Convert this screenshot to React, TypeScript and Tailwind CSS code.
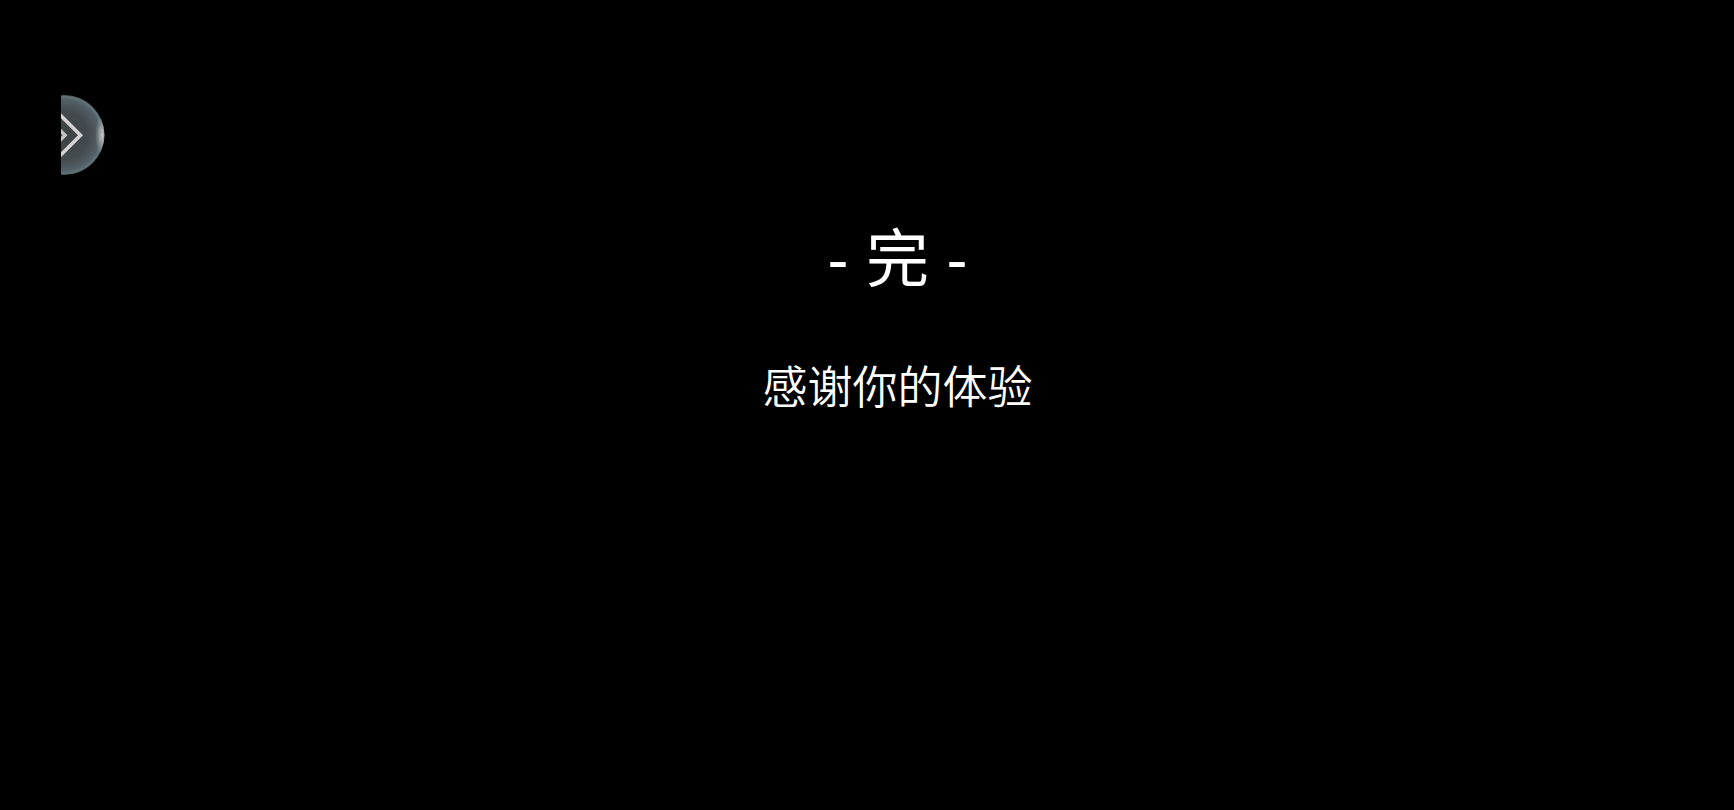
import React from 'react';

interface MenuHandleProps {
  onOpen?: () => void;
}

const MenuHandle: React.FC<MenuHandleProps> = ({ onOpen }) => {
  return (
    <button
      type="button"
      onClick={onOpen}
      aria-label="展开"
      className="block cursor-pointer"
    >
      <svg width="46" height="80" viewBox="0 0 46 80" fill="none">
        <defs>
          <radialGradient id="orb" gradientUnits="userSpaceOnUse" cx="3.5" cy="40" r="40">
            <stop offset="0" stopColor="#3c4042" />
            <stop offset="0.6" stopColor="#444b4e" />
            <stop offset="0.88" stopColor="#526066" />
            <stop offset="0.96" stopColor="#627377" />
            <stop offset="1" stopColor="#3f4c50" />
          </radialGradient>
          <radialGradient
            id="shine"
            cx="0"
            cy="0"
            r="1"
            gradientUnits="userSpaceOnUse"
            gradientTransform="translate(41 40) scale(7 22)"
          >
            <stop offset="0" stopColor="#c4c7c8" />
            <stop offset="0.4" stopColor="#a8adaf" stopOpacity="0.7" />
            <stop offset="1" stopColor="#8a9598" stopOpacity="0" />
          </radialGradient>
        </defs>
        <circle cx="3.5" cy="40" r="40" fill="url(#orb)" />
        <circle cx="3.5" cy="40" r="40" fill="url(#shine)" />
        {/* double chevron, cut off by the edge */}
        <path d="M-2 18.7L19.5 40.2L-2 61.7" stroke="#d4d4d4" strokeWidth="3.6" />
        <path d="M-5 31.2L4 40.2L-5 49.2" stroke="#c4c4c4" strokeWidth="3.6" />
      </svg>
    </button>
  );
};

const App: React.FC = () => {
  return (
    <div className="relative min-h-screen bg-black pl-[61px] font-['Liberation_Sans','Noto_Sans_CJK_SC',sans-serif] text-white">
      <div className="absolute top-[95px]">
        <MenuHandle />
      </div>

      <main className="flex flex-col items-center pt-[213px] text-center">
        <h1 className="text-[63px] leading-[92px]">- 完 -</h1>
        <p className="mt-12 font-['Noto_Sans_CJK_SC',sans-serif] text-[45px] leading-[64px] font-[350]">
          感谢你的体验
        </p>
      </main>
    </div>
  );
};

export default App;
